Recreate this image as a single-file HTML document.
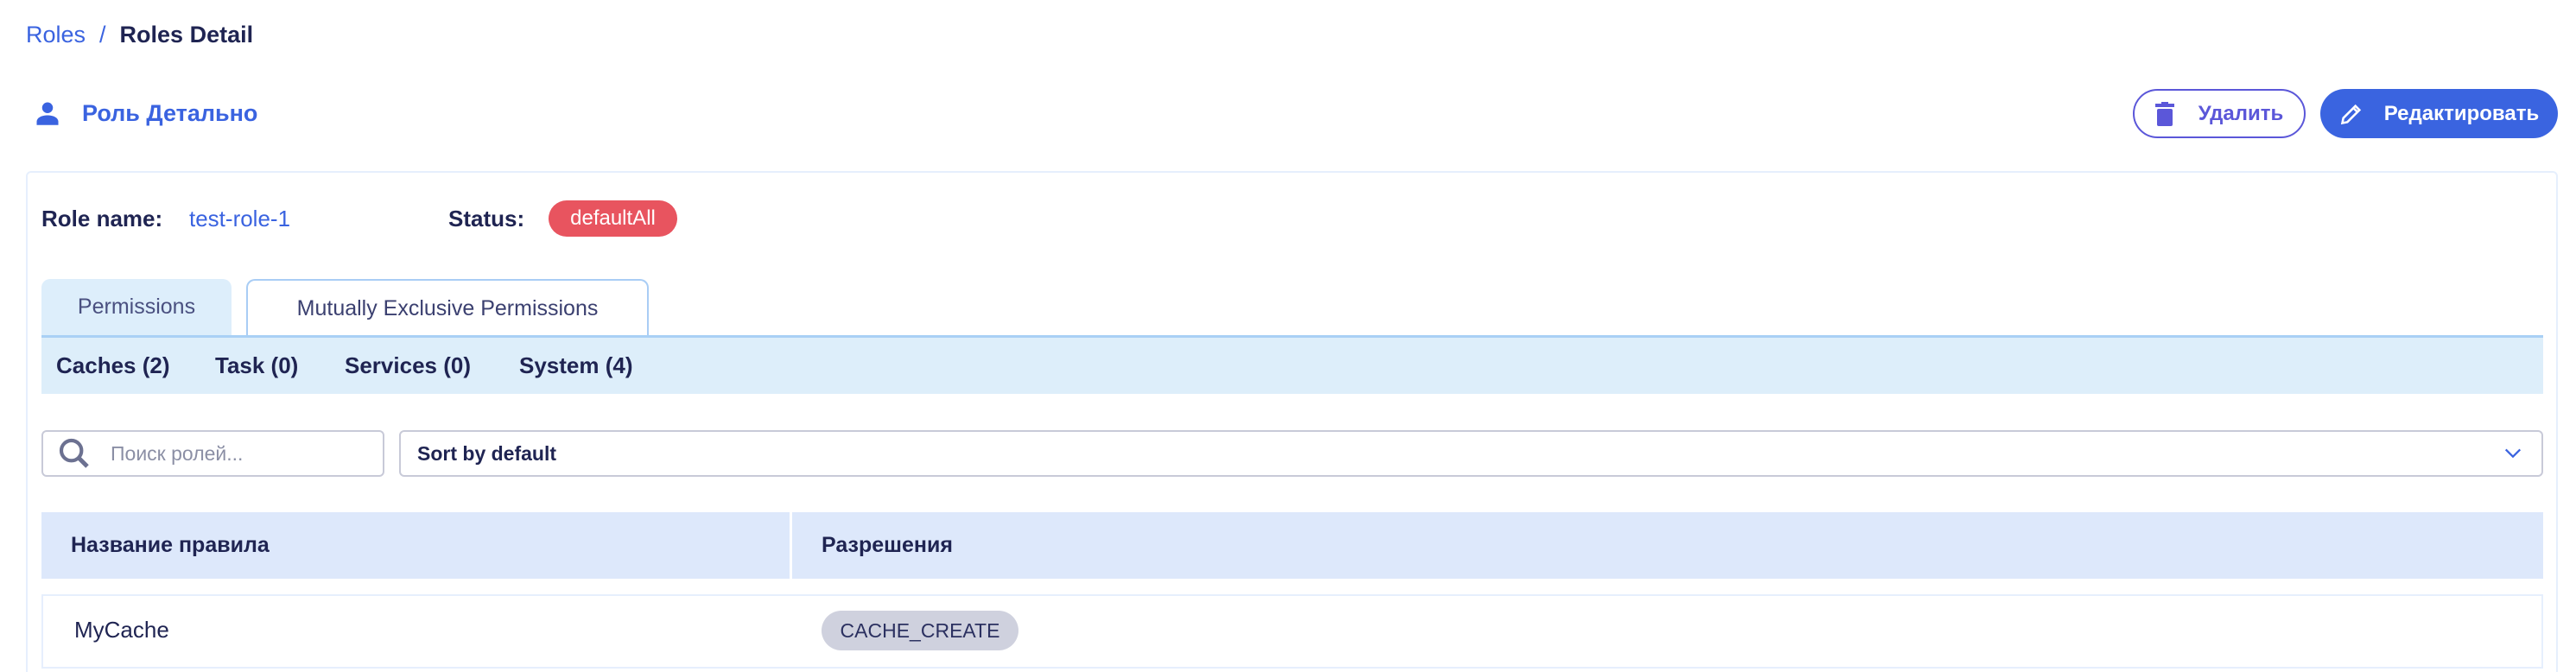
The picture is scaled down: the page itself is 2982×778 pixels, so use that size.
<!DOCTYPE html>
<html><head><meta charset="utf-8"><style>
*{box-sizing:border-box;margin:0;padding:0}
html,body{width:2982px;height:778px;overflow:hidden}
body{background:#fff;font-family:"Liberation Sans","Noto Sans CJK SC",sans-serif;color:#1f2452;position:relative}
.a{position:absolute;white-space:nowrap}
.c{display:flex;align-items:center}
</style></head><body>
<div class="a c" style="left:30px;top:22px;height:36px;font-size:27px">
<span style="color:#3a63e0">Roles</span><span style="margin:0 16px;color:#3a63e0">/</span><span style="font-weight:bold;color:#1f2452">Roles Detail</span></div>

<svg class="a" style="left:40px;top:116px" width="30" height="30" viewBox="0 0 24 24"><circle cx="12" cy="7" r="5" fill="#3a63e0"/><path d="M2 23v-3c0-4 5-6 10-6s10 2 10 6v3z" fill="#3a63e0"/></svg>
<div class="a c" style="left:95px;top:112px;height:38px;font-size:27px;font-weight:bold;color:#3a63e0">Роль Детально</div>

<div class="a c" style="left:2469px;top:103px;width:200px;height:57px;border:2px solid #5b57d9;border-radius:29px;justify-content:center;color:#5b57d9;font-size:24px;font-weight:bold">
<svg width="22" height="28" viewBox="0 0 22 28" style="margin-right:28px"><rect x="0" y="2" width="22" height="4" fill="#5b57d9"/><rect x="7" y="0" width="8" height="3" fill="#5b57d9"/><rect x="2" y="8" width="18" height="20" rx="2" fill="#5b57d9"/></svg>Удалить</div>
<div class="a c" style="left:2686px;top:103px;width:275px;height:57px;background:#3a64e0;border-radius:29px;justify-content:center;color:#fff;font-size:24px;font-weight:bold">
<svg width="28" height="28" viewBox="0 0 24 24" style="margin-right:24px"><path d="M3 21l1-5L16 4l4 4L8 20z M14 6l4 4" fill="none" stroke="#fff" stroke-width="2.2"/></svg>Редактировать</div>

<div class="a" style="left:30px;top:198px;width:2931px;height:600px;border:2px solid #e6effd;border-radius:6px"></div>

<div class="a c" style="left:48px;top:232px;height:42px;font-size:26px"><b>Role name:</b></div>
<div class="a c" style="left:219px;top:232px;height:42px;font-size:26px;color:#3a63e0">test-role-1</div>
<div class="a c" style="left:519px;top:232px;height:42px;font-size:26px"><b>Status:</b></div>
<div class="a c" style="left:635px;top:232px;width:149px;height:42px;background:#e8545f;border-radius:21px;color:#fff;font-size:24px;justify-content:center">defaultAll</div>

<div class="a c" style="left:48px;top:323px;width:220px;height:65px;background:#ddeefb;border-radius:10px 10px 0 0;justify-content:center;font-size:25px;color:#4a5080">Permissions</div>
<div class="a c" style="left:285px;top:323px;width:466px;height:67px;background:#fff;border:2px solid #a9cdf5;border-bottom:none;border-radius:10px 10px 0 0;justify-content:center;font-size:25px;color:#3b4070">Mutually Exclusive Permissions</div>
<div class="a" style="left:48px;top:388px;width:2896px;height:68px;background:#ddeefa;border-top:3px solid #a9d0f5"></div>
<div class="a c" style="left:65px;top:390px;height:66px;font-size:26px;font-weight:bold">Caches (2)</div>
<div class="a c" style="left:249px;top:390px;height:66px;font-size:26px;font-weight:bold">Task (0)</div>
<div class="a c" style="left:399px;top:390px;height:66px;font-size:26px;font-weight:bold">Services (0)</div>
<div class="a c" style="left:601px;top:390px;height:66px;font-size:26px;font-weight:bold">System (4)</div>

<div class="a c" style="left:48px;top:498px;width:397px;height:54px;border:2px solid #c8cad8;border-radius:6px;font-size:23px;color:#8b8fa5">
<svg width="40" height="40" viewBox="0 0 24 24" style="margin:0 22px 0 16px"><circle cx="10" cy="10" r="7" fill="none" stroke="#6c7191" stroke-width="2.5"/><path d="M15 15l6 6" stroke="#6c7191" stroke-width="3"/></svg>Поиск ролей...</div>
<div class="a c" style="left:462px;top:498px;width:2482px;height:54px;border:2px solid #c8cad8;border-radius:6px;font-size:23px;font-weight:bold;padding-left:19px">Sort by default
<svg class="a" style="right:20px;top:14px" width="26" height="22" viewBox="0 0 24 24"><path d="M3 7l9 9 9-9" fill="none" stroke="#3a63e0" stroke-width="2.5"/></svg></div>

<div class="a" style="left:48px;top:593px;width:2896px;height:77px;background:#dde8fb"></div>
<div class="a" style="left:914px;top:593px;width:3px;height:77px;background:#fff"></div>
<div class="a c" style="left:82px;top:593px;height:77px;font-size:25px;font-weight:bold">Название правила</div>
<div class="a c" style="left:951px;top:593px;height:77px;font-size:25px;font-weight:bold">Разрешения</div>

<div class="a" style="left:48px;top:688px;width:2896px;height:86px;border:2px solid #e6effd"></div>
<div class="a c" style="left:86px;top:708px;height:42px;font-size:26px">MyCache</div>
<div class="a c" style="left:951px;top:707px;width:228px;height:46px;background:#cfd1de;border-radius:23px;justify-content:center;font-size:23px;color:#2b3060">CACHE_CREATE</div>
</body></html>
